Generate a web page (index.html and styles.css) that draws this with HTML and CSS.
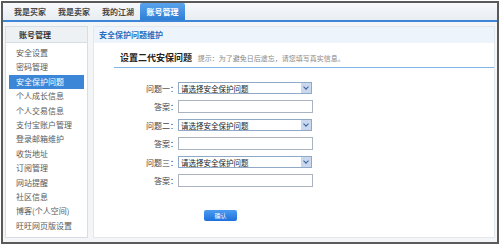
FILE: index.html
```html
<!DOCTYPE html>
<html lang="zh-CN">
<head>
    <meta charset="UTF-8">
    <title>账号管理 - 安全保护问题维护</title>
    <link rel="stylesheet" href="styles.css">
</head>
<body>
    <div class="frame">
        <div class="tabs">
            <span class="tab">我是买家</span>
            <span class="tab">我是卖家</span>
            <span class="tab">我的江湖</span>
            <span class="tab active">账号管理</span>
        </div>

        <div class="main">
            <div class="sidebar">
                <div class="side-title">账号管理</div>
                <ul class="side-menu">
                    <li>安全设置</li>
                    <li>密码管理</li>
                    <li class="current">安全保护问题</li>
                    <li>个人成长信息</li>
                    <li>个人交易信息</li>
                    <li>支付宝账户管理</li>
                    <li>登录邮箱维护</li>
                    <li>收货地址</li>
                    <li>订阅管理</li>
                    <li>网站提醒</li>
                    <li>社区信息</li>
                    <li>博客(个人空间)</li>
                    <li>旺旺网页版设置</li>
                </ul>
            </div>

            <div class="content">
                <div class="content-title">安全保护问题维护</div>
                <div class="sub-head">
                    <span class="sub-title">设置二代安保问题</span>
                    <span class="hint">提示：为了避免日后遗忘，请您填写真实信息。</span>
                </div>

                <div class="form">
                    <div class="row">
                        <label>问题一：</label>
                        <div class="select"><span>请选择安全保护问题</span><i class="arrow"></i></div>
                    </div>
                    <div class="row">
                        <label>答案：</label>
                        <div class="input"></div>
                    </div>
                    <div class="row">
                        <label>问题二：</label>
                        <div class="select"><span>请选择安全保护问题</span><i class="arrow"></i></div>
                    </div>
                    <div class="row">
                        <label>答案：</label>
                        <div class="input"></div>
                    </div>
                    <div class="row">
                        <label>问题三：</label>
                        <div class="select"><span>请选择安全保护问题</span><i class="arrow"></i></div>
                    </div>
                    <div class="row">
                        <label>答案：</label>
                        <div class="input"></div>
                    </div>
                    <div class="actions">
                        <span class="btn">确认</span>
                    </div>
                </div>
            </div>
        </div>
    </div>
</body>
</html>
```

FILE: styles.css
```css
* {
    box-sizing: border-box;
}
body {
    margin: 0;
    padding: 0;
    background: #ffffff;
    font-family: "Noto Sans CJK SC", "Noto Sans", sans-serif;
    font-size: 8px;
    color: #333;
}
.frame {
    width: 498px;
    height: 243px;
    margin: 1px 0 0 1px;
    border: 2px solid #5a5a5a;
    background: #fff;
    display: flex;
    flex-direction: column;
}
.tabs {
    height: 19px;
    display: flex;
    align-items: flex-end;
    padding-left: 5px;
    background: linear-gradient(#f7f9fb, #e8edf2);
    border-bottom: 2px solid #3c86d8;
}
.tab {
    width: 44px;
    height: 17px;
    line-height: 17px;
    text-align: center;
    font-weight: bold;
    color: #4a4a4a;
}
.tab.active {
    width: 45px;
    background: linear-gradient(#5aa3ec, #2f7fd6);
    color: #fff;
    border-radius: 2px 2px 0 0;
}
.main {
    flex: 1;
    display: flex;
    gap: 5px;
    padding: 4px 2px 4px 2px;
    background: #f3f5f7;
}
.sidebar {
    width: 83px;
    border: 1px solid #d5dde6;
    background: #fff;
}
.side-title {
    height: 16px;
    line-height: 16px;
    padding-left: 13px;
    font-weight: bold;
    color: #333;
    background: #eef1f4;
    border-bottom: 1px solid #d5dde6;
}
.side-menu {
    list-style: none;
    margin: 0;
    padding: 3px 3px 0 3px;
}
.side-menu li {
    height: 14.4px;
    line-height: 14.4px;
    padding-left: 7px;
    color: #5a5a5a;
    white-space: nowrap;
}
.side-menu li.current {
    background: #3c86d8;
    color: #fff;
}
.content {
    flex: 1;
    background: #fff;
    border: 1px solid #e2e8ee;
}
.content-title {
    height: 16px;
    line-height: 16px;
    padding-left: 5px;
    font-weight: bold;
    color: #2a6fc0;
    background: #eef4fb;
}
.sub-head {
    margin: 8px 0 0 20px;
    height: 17px;
    padding-left: 6px;
    border-bottom: 1px solid #7fb6ea;
    line-height: 14px;
}
.sub-title {
    font-weight: bold;
    font-size: 9px;
    color: #222;
}
.hint {
    font-size: 7px;
    color: #888;
    margin-left: 4px;
}
.form {
    padding-top: 11px;
}
.row {
    display: flex;
    align-items: center;
    height: 18.5px;
}
.row label {
    width: 84px;
    text-align: right;
    color: #444;
}
.select {
    width: 134px;
    height: 12px;
    border: 1px solid #8fa9c6;
    display: flex;
    align-items: center;
    justify-content: space-between;
    padding-left: 2px;
    color: #222;
    font-size: 7.5px;
}
.arrow {
    width: 10px;
    height: 10px;
    background: #c9d8ef;
    position: relative;
}
.arrow::after {
    content: "";
    position: absolute;
    left: 3px;
    top: 2px;
    width: 3px;
    height: 3px;
    border-right: 1px solid #3a5f9a;
    border-bottom: 1px solid #3a5f9a;
    transform: rotate(45deg);
}
.input {
    width: 135px;
    height: 13px;
    border: 1px solid #a9b4c0;
}
.actions {
    padding: 19px 0 0 110px;
}
.btn {
    display: inline-block;
    width: 33px;
    height: 11px;
    line-height: 11px;
    text-align: center;
    color: #fff;
    font-size: 6px;
    border-radius: 2px;
    background: linear-gradient(#4b9cf0, #1d6fdc);
}
```
